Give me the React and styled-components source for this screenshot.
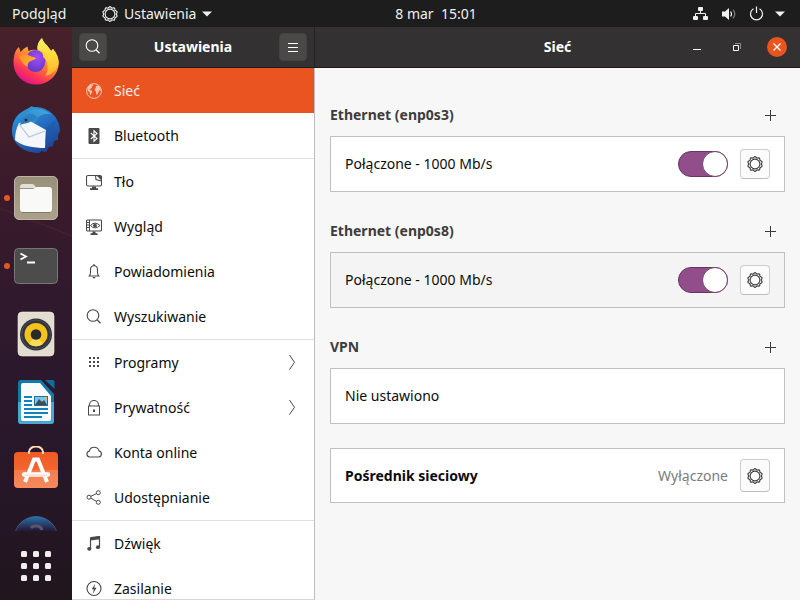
import React from "react";
import styled, { createGlobalStyle, css } from "styled-components";

const GlobalStyle = createGlobalStyle`
  *, *::before, *::after { box-sizing: border-box; }
  body {
    margin: 0;
    background: #f7f7f7;
    font-family: "Noto Sans", "Open Sans", sans-serif;
    font-size: 14px;
    line-height: 20px;
    color: #0c0c0c;
  }
  button { font: inherit; color: inherit; border: 0; padding: 0; background: none; cursor: default; }
  svg { display: block; flex: none; }
`;

/* ---------- shell ---------- */

const Desktop = styled.div`
  display: grid;
  grid-template-columns: 72px minmax(0, 1fr);
  grid-template-rows: 27px minmax(0, 1fr);
  height: 100vh;
  overflow: hidden;
`;

const TopBar = styled.header`
  grid-column: 1 / -1;
  display: grid;
  grid-template-columns: 72px minmax(0, 1fr) auto minmax(0, 1fr);
  align-items: center;
  background: #1d1d1d;
  color: #f0f0f0;
`;

const BarButton = styled.button`
  display: flex;
  align-items: center;
  gap: ${(p) => p.$gap || 6}px;
  padding: 0 ${(p) => p.$pad || 0}px;
  white-space: pre;
`;

const AppMenu = styled(BarButton)`
  margin-left: 30px;
`;

const StatusMenu = styled(BarButton)`
  justify-self: end;
  padding-right: 15px;
`;

const Dock = styled.nav`
  display: flex;
  flex-direction: column;
  min-height: 0;
  background:
    linear-gradient(201deg, transparent 48%, rgba(150, 60, 70, 0.18) 50%, transparent 52%) 0 175px / 100% 40px no-repeat,
    linear-gradient(#47212a 0%, #3c1b2a 25%, #2f192d 50%, #28172a 75%, #20151d 100%);
`;

const DockList = styled.div`
  flex: 1;
  min-height: 0;
  overflow: hidden;
  display: flex;
  flex-direction: column;
  gap: 20px;
  padding-top: 11px;
`;

const DockItem = styled.button`
  flex: none;
  position: relative;
  display: grid;
  place-items: center;
  height: 48px;

  ${(p) =>
    p.$running &&
    css`
      &::before {
        content: "";
        position: absolute;
        left: 4px;
        top: 21px;
        width: 6px;
        height: 6px;
        border-radius: 50%;
        background: #ea5420;
      }
    `}
`;

const AppsButton = styled.button`
  flex: none;
  display: grid;
  place-items: center;
  height: 69px;
`;

/* ---------- window ---------- */

const Window = styled.div`
  display: grid;
  grid-template-columns: 243px minmax(0, 1fr);
  grid-template-rows: 41px minmax(0, 1fr);
  min-height: 0;
`;

const HeaderBar = styled.div`
  display: grid;
  grid-template-columns: 28px minmax(0, 1fr) 28px;
  align-items: center;
  padding: 0 7px;
  background: #343132;
  border-bottom: 1px solid #1b1919;
  border-right: 1px solid #242222;
  color: #fff;
`;

const MainHeaderBar = styled(HeaderBar)`
  grid-template-columns: 100px minmax(0, 1fr) 100px;
  border-right: 0;
  padding: 0 13px;
`;

const HeaderTitle = styled.h1`
  margin: 0;
  font-size: 14px;
  line-height: 20px;
  font-weight: 700;
  text-align: center;
`;

const HeaderButton = styled.button`
  display: grid;
  place-items: center;
  width: 28px;
  height: 28px;
  border-radius: 4px;
  border: 1px solid #454342;
  background: #4b4948;
`;

const WindowControls = styled.div`
  display: flex;
  justify-content: flex-end;
  gap: 20px;
`;

const WindowControl = styled.button`
  display: grid;
  place-items: center;
  flex: none;
  width: 20px;
  height: 20px;
  border-radius: 50%;
  background: ${(p) => (p.$close ? "#e95420" : "transparent")};
`;

const Sidebar = styled.nav`
  min-height: 0;
  overflow: hidden;
  background: #fff;
  border-right: 1px solid #bdbdbd;
  border-bottom: 1px solid #d8d8d8;
`;

const SideGroup = styled.div`
  & + & { border-top: 1px solid #e2e2e2; }
`;

const SideLink = styled.a`
  display: flex;
  align-items: center;
  gap: 12px;
  height: 45px;
  padding: 0 18px 0 14px;
  text-decoration: none;
  color: ${(p) => (p.$active ? "#fdf1ec" : "#0c0c0c")};
  background: ${(p) => (p.$active ? "#e95420" : "transparent")};

  > svg { color: ${(p) => (p.$active ? "#fac6b4" : "#4a4a4a")}; }
`;

const SideLabel = styled.span`
  flex: 1;
`;

const Main = styled.main`
  min-height: 0;
  overflow: hidden;
  padding: 32px 15px 0;
  background: #f7f7f7;
`;

const Section = styled.section`
  margin-bottom: 24px;
`;

const SectionHead = styled.div`
  display: flex;
  align-items: center;
  justify-content: space-between;
  height: 30px;
  margin-bottom: 6px;
  padding-right: 4px;
`;

const SectionTitle = styled.h2`
  margin: 0;
  font-size: 14px;
  line-height: 20px;
  font-weight: 700;
  color: #3d3d3d;
`;

const AddButton = styled.button`
  display: grid;
  place-items: center;
  width: 21px;
  height: 21px;
`;

const Card = styled.div`
  display: flex;
  align-items: center;
  gap: 12px;
  height: ${(p) => (p.$compact ? 55 : 56)}px;
  padding: 0 14px;
  border: 1px solid #c0c0c0;
  background: ${(p) => (p.$muted ? "#f4f4f4" : "#fff")};
`;

const CardLabel = styled.span`
  flex: 1;
  font-weight: ${(p) => (p.$strong ? 700 : 400)};
`;

const CardStatus = styled.span`
  color: #7c7c7c;
`;

const Switch = styled.input`
  appearance: none;
  flex: none;
  position: relative;
  width: 50px;
  height: 26px;
  margin: 0;
  border: 1px solid #663561;
  border-radius: 13px;
  background: #924d8b;

  &::after {
    content: "";
    position: absolute;
    top: -1px;
    right: -1px;
    width: 26px;
    height: 26px;
    border: 1px solid #74406f;
    border-radius: 50%;
    background: #fff;
  }

  &:not(:checked) { background: #d5d5d5; }
  &:not(:checked)::after { right: auto; left: -1px; }
`;

const GearButton = styled.button`
  display: grid;
  place-items: center;
  flex: none;
  width: 30px;
  height: ${(p) => (p.$tall ? 33 : 30)}px;
  border: 1px solid #cdcdcd;
  border-bottom-color: #bdbdbd;
  border-radius: 4px;
  background: #fbfbfb;
  color: #3d3d3d;
`;

/* ---------- symbolic icons ---------- */

const Icon = ({ size = 16, children }) => (
  <svg width={size} height={size} viewBox="0 0 16 16" fill="none" stroke="currentColor" aria-hidden="true">
    {children}
  </svg>
);

/* Outline of a ten-toothed cog with rounded teeth. */
const cogOutline =
  Array.from({ length: 100 }, (_, i) => {
    const angle = (i / 100) * Math.PI * 2;
    const radius = 6.8 + 0.55 * Math.cos(angle * 10);
    const x = (8 + radius * Math.sin(angle)).toFixed(2);
    const y = (8 - radius * Math.cos(angle)).toFixed(2);
    return `${i ? "L" : "M"}${x} ${y}`;
  }).join("") + "z";

const Gear = () => (
  <Icon>
    <path d={cogOutline} strokeWidth="1.2" />
    <circle cx="8" cy="8" r="4.9" strokeWidth="1.1" />
  </Icon>
);

const Caret = () => (
  <svg width="10" height="6" viewBox="0 0 10 6" aria-hidden="true">
    <path d="M0 .5h10L5 5.5z" fill="currentColor" />
  </svg>
);

const Search = ({ size = 16 }) => (
  <Icon size={size}>
    <circle cx="7" cy="6.5" r="5.8" strokeWidth="1.1" />
    <path d="M11 10.700 14.500 14.200" strokeWidth="1.300" />
  </Icon>
);

const Plus = () => (
  <svg width="11" height="11" viewBox="0 0 11 11" aria-hidden="true">
    <path d="M5.5 0v11M0 5.5h11" stroke="#3a3a3a" strokeWidth="1" />
  </svg>
);

const Globe = () => (
  <Icon>
    <circle cx="8" cy="8" r="7.4" strokeWidth="1" />
    <g fill="currentColor" stroke="none">
      <path d="M1.200 5.200 3.200 2.600 5.800 1.200l1.400.5-.5 1-1.300.9.700 1-1 .9-1.200.3-.2 1.100 1.700.6.900 1.300-.9 1.400-.5 1.900-.8-.3-.4-2.500-1.600-1.400z" />
      <path d="M9.800 4.200 10.600 2.400l2 .5 1.800 2.300.4 2.500-.7.2-.9-.8-.6 1.600-.9 2.500-1.100.6-.6-1.500.1-1.700-1.200-1.100-.1-1.700 1-.8z" />
    </g>
  </Icon>
);

const Bluetooth = () => (
  <Icon>
    <rect x="2.500" y="0" width="11" height="16" rx="1" fill="currentColor" stroke="none" />
    <path d="M4.800 5 11 10.600 8 13.200V2.800l3 2.600L4.800 11" stroke="#fff" strokeWidth="1.100" />
  </Icon>
);

const Background = () => (
  <Icon>
    <path d="M9.500 1.500H2A1.500 1.500 0 0 0 .5 3v7.500A1.500 1.500 0 0 0 2 12h12a1.500 1.500 0 0 0 1.500-1.500V7M9.500 1.500 10 5.500 15.500 7V3A1.500 1.500 0 0 0 14 1.500z" strokeWidth="1.100" />
    <path d="M10.500 1.500H14L15.500 3v3.500z" fill="currentColor" stroke="none" />
    <path d="M6 12.500h4v1.700h2V16H4v-1.800h2z" fill="currentColor" stroke="none" />
  </Icon>
);

const Appearance = () => (
  <Icon>
    <rect x=".5" y="1" width="15" height="11" rx="1" strokeWidth="1.100" />
    <path d="M3.500 1v11M.5 3.500h3M.5 6h3M.5 8.500h3" strokeWidth="1" />
    <path d="M4.500 6.500Q9 1.700 14 6.500 9 11.300 4.500 6.500z" />
    <circle cx="9" cy="6.500" r="1.500" fill="currentColor" />
    <path d="M6.500 12.500h3v1.700h2V16h-7v-1.800h2z" fill="currentColor" stroke="none" />
  </Icon>
);

const Bell = () => (
  <Icon>
    <path d="M3.200 12c1.100-1.200 1.300-2 1.300-3.500V5.700C4.500 3.400 5.800 1.700 8 1.700s3.500 1.700 3.500 4v2.800c0 1.500.2 2.300 1.300 3.500z" strokeWidth="1.100" />
    <path d="M8 .2v1.500" strokeWidth="1.600" />
    <path d="M6.200 13h3.600L8 14.800z" fill="currentColor" stroke="none" />
  </Icon>
);

const Apps = () => (
  <Icon>
    <path d="M3 3h10M3 7h10M3 11h10" strokeWidth="2" strokeDasharray="2 2" />
  </Icon>
);

const Lock = () => (
  <Icon>
    <rect x="2.500" y="6" width="11" height="9" />
    <path d="M3.600 6V4.500a4.400 4 0 0 1 8.800 0V6" strokeWidth="1.100" />
    <path d="M7 9.500h2V12H7z" fill="currentColor" stroke="none" />
  </Icon>
);

const Cloud = () => (
  <Icon>
    <path d="M3.500 12a3 3 0 0 1-.2-5.900A5 5 0 0 1 13 5.900a3.100 3.100 0 0 1-.4 6.100z" strokeWidth="1.100" />
  </Icon>
);

const Share = () => (
  <Icon>
    <circle cx="3" cy="7.200" r="2" />
    <circle cx="12.300" cy="2.700" r="2" />
    <circle cx="12.300" cy="12.300" r="2" />
    <path d="m4.800 6.300 5.700-2.700M4.800 8.200l5.700 3.200" />
  </Icon>
);

const Music = () => (
  <Icon>
    <path d="M4.500 12.500V2.300L13.500.8v10" strokeWidth="1.200" />
    <path d="M4.500 1 14 0v3.200L4.500 4.400z" fill="currentColor" stroke="none" />
    <ellipse cx="3.300" cy="12.800" rx="2.100" ry="1.900" fill="currentColor" stroke="none" />
    <ellipse cx="12" cy="11.200" rx="2.100" ry="1.900" fill="currentColor" stroke="none" />
  </Icon>
);

const Power = () => (
  <Icon>
    <circle cx="8" cy="7.500" r="7" strokeWidth="1.100" />
    <path d="M9 2.700 5.800 8.200h2l-.8 4.500 3.500-5.900H8.300z" fill="currentColor" stroke="none" />
  </Icon>
);

const Chevron = () => (
  <svg width="8" height="16" viewBox="0 0 8 16" fill="none" aria-hidden="true">
    <path d="m1.500 0 5 7.300-5 7.300" stroke="currentColor" />
  </svg>
);

const Menu = () => (
  <Icon>
    <path d="M3 4.500h10M3 8.500h10M3 12.500h10" strokeWidth="1" />
  </Icon>
);

const StatusIcons = () => (
  <svg width="72" height="16" viewBox="0 0 72 16" fill="none" stroke="currentColor" aria-hidden="true">
    <g fill="currentColor" stroke="none">
      <rect x="5" y="1" width="5" height="4" rx="1" />
      <rect x="0" y="10" width="5" height="4" rx="1" />
      <rect x="10" y="10" width="5" height="4" rx="1" />
    </g>
    <path d="M7.500 5v2.500M2.500 10V7.500h10V10" />
    <path d="M29 5.500h3L36 2v12l-4-3.500h-3z" fill="currentColor" stroke="none" />
    <path d="M37.600 5.500q1.800 2.500 0 5" strokeWidth="1.200" />
    <path d="M40 3.600q3.600 4.400 0 8.800" stroke="#777" strokeWidth="1.300" />
    <path d="M60.500 2.700a6 6 0 1 0 6 0M63.500 .5v6.500" strokeWidth="1.200" />
  </svg>
);

/* ---------- dock artwork ---------- */

const Art = ({ children }) => (
  <svg width="48" height="48" viewBox="0 0 48 48" aria-hidden="true">
    {children}
  </svg>
);

const Firefox = () => (
  <Art>
    <defs>
      <linearGradient id="ffBody" x1=".85" y1=".1" x2=".35" y2="1">
        <stop offset="0" stopColor="#ffe23c" />
        <stop offset=".3" stopColor="#ffb52d" />
        <stop offset=".55" stopColor="#ff7438" />
        <stop offset=".8" stopColor="#fb3358" />
        <stop offset="1" stopColor="#e2128a" />
      </linearGradient>
      <linearGradient id="ffFlame" x1=".5" y1="0" x2=".6" y2="1">
        <stop offset="0" stopColor="#f5f064" />
        <stop offset=".5" stopColor="#ffd83a" />
        <stop offset="1" stopColor="#ffb02e" />
      </linearGradient>
      <radialGradient id="ffCore" cx=".6" cy=".35" r=".7">
        <stop offset="0" stopColor="#a54cf5" />
        <stop offset="1" stopColor="#5f38c4" />
      </radialGradient>
      <linearGradient id="ffHead" x1="0" y1="0" x2="1" y2=".6">
        <stop offset="0" stopColor="#ff8a2b" />
        <stop offset="1" stopColor="#ffb62c" />
      </linearGradient>
    </defs>
    <path
      d="M7 9 8.500 14Q12 10 15.500 8.500L16.500 13Q20 11 26 12C25 7 27 3 30 0c1 5 6 7 9 13l2-2c4 4 5.700 9 5.700 14A22.500 21.500 0 0 1 1.500 25C1.500 18 3 12 7 9z"
      fill="url(#ffBody)"
    />
    <path d="M30 0c1 5 6 7 9 13l2-2c4 5 6 10 5.600 15-2 6-6 10-13 12 5-10 1-19-7.600-25C24 8 27 3 30 0z" fill="url(#ffFlame)" />
    <ellipse cx="23.500" cy="23" rx="10" ry="11" fill="url(#ffCore)" />
    <path d="M27 12c8 2 11 8 9 16 0-4-2-7-5-9 1-2-1-5-4-7z" fill="#ffcf36" />
    <path d="M7 18c4-3 8-2 11 0 2 1 5 1 6 2-1 2-4 2-7 4-1 1-2 3-1 5-4-2-8-6-9-11z" fill="url(#ffHead)" />
  </Art>
);

const Thunderbird = () => (
  <Art>
    <defs>
      <linearGradient id="tbBody" x1=".2" y1="0" x2=".8" y2="1">
        <stop offset="0" stopColor="#2f9be0" />
        <stop offset=".45" stopColor="#2470c2" />
        <stop offset="1" stopColor="#203c8f" />
      </linearGradient>
      <linearGradient id="tbHead" x1="0" y1="1" x2="1" y2="0">
        <stop offset="0" stopColor="#2576bd" />
        <stop offset="1" stopColor="#45acdf" />
      </linearGradient>
    </defs>
    <path d="M13 4Q17 2 20 0l1 1C36 0 48 11 48 25l-2 4 0 5-4 1-1 5-4 1-3 5-4-1-3 2C12 47 0 38 0 25 0 15 5 8 13 4z" fill="url(#tbBody)" />
    <path d="M8 21C9 10 15 3 25 3c5 0 10 2 14 5-7-1-13 2-15 7-3 5-9 6-16 6z" fill="url(#tbHead)" />
    <path d="m7 17 11-2 16 9-1 18C22 42 9 40 3 34 3 28 4 23 7 17z" fill="#f5f6f9" />
    <path d="m7 18 10 13 16-6" fill="none" stroke="#bcc4d0" strokeWidth="1.200" />
    <path d="M8 19C9 14 13 9 18 8c4 0 7 2 7 5-4 1-7 4-14 5z" fill="#2a80c4" />
    <circle cx="14" cy="14" r="1.500" fill="#342921" />
    <path d="m34 22 10-8-2 9 5 2-7 6 2 4-9 2z" fill="#1a55a8" opacity=".5" />
  </Art>
);

const Files = () => (
  <Art>
    <defs>
      <linearGradient id="fileBack" x1="0" y1="0" x2="0" y2="1">
        <stop offset="0" stopColor="#989078" />
        <stop offset="1" stopColor="#aaa18a" />
      </linearGradient>
    </defs>
    <rect x="2.500" y="2.500" width="43" height="43" rx="4.500" fill="url(#fileBack)" stroke="#b9b3a2" />
    <path d="M8 13a3 3 0 0 1 3-3h9q2 0 3 2l1 2H8z" fill="#e2dfd8" />
    <path d="M8 15h13l3-2h13a3 3 0 0 1 3 3v19a3 3 0 0 1-3 3H11a3 3 0 0 1-3-3z" fill="#f9f9f8" />
    <path d="M10 38.500h28" stroke="#7f7867" />
  </Art>
);

const Terminal = () => (
  <Art>
    <rect x="2.500" y="6.500" width="43" height="35" rx="4" fill="#4c4c4c" stroke="#777" />
    <path d="m8.500 11.500 5.500 3-5.500 3M15 20.500h8" fill="none" stroke="#fff" strokeWidth="1.800" />
  </Art>
);

const Rhythmbox = () => (
  <Art>
    <rect x="6" y="2" width="36" height="44" rx="4" fill="#e3ddd0" stroke="#f0ece3" strokeWidth=".6" />
    <circle cx="24" cy="24.500" r="16" fill="#32343d" />
    <circle cx="24" cy="24.500" r="14.500" fill="none" stroke="#4c4d54" />
    <circle cx="24" cy="24.500" r="11.500" fill="#f3c21b" />
    <path d="M24 24.500 17 34a11.500 11.500 0 0 0 14 0z" fill="#f9dc5c" />
    <circle cx="24" cy="24.500" r="5.300" fill="#292a2b" />
  </Art>
);

const Writer = () => (
  <Art>
    <path d="M9 2h20l13 14v27a3 3 0 0 1-3 3H9a3 3 0 0 1-3-3V5a3 3 0 0 1 3-3z" fill="#1478ad" />
    <path d="M6 24h36v19a3 3 0 0 1-3 3H9a3 3 0 0 1-3-3z" fill="#4aa6d3" />
    <path d="M11 5h17l11 13v23a2 2 0 0 1-2 2H11a2 2 0 0 1-2-2V7a2 2 0 0 1 2-2z" fill="#fafbfc" />
    <path d="M33 2h8a1.500 1.500 0 0 1 1.500 1.500V11z" fill="#126c9f" />
    <path d="M12 19h8M12 23h8M12 27h8M12 31h24M12 35h24M12 39h18" stroke="#1482bb" strokeWidth="2" />
    <rect x="22.500" y="18.500" width="13" height="9" fill="#79c7ef" stroke="#1675a6" />
    <path d="m23 27 4-6 3 3 2-2 3 5z" fill="#484b4d" />
    <path d="M32 19h3v3z" fill="#f1ba21" />
  </Art>
);

const Software = () => (
  <Art>
    <defs>
      <linearGradient id="bag" x1="0" y1="0" x2="0" y2="1">
        <stop offset="0" stopColor="#f05a24" />
        <stop offset=".5" stopColor="#f3662f" />
        <stop offset=".51" stopColor="#f57b4b" />
        <stop offset="1" stopColor="#f58b5e" />
      </linearGradient>
    </defs>
    <rect x="2" y="6" width="44" height="36" rx="4" fill="url(#bag)" />
    <path d="M17 8V6a7 5.500 0 0 1 14 0v2" fill="none" stroke="#ffdcb4" strokeWidth="2" />
    <g fill="none" stroke="#fff">
      <path d="m13 36 9-22.500h4L35 36" strokeWidth="4" />
      <path d="M12 28.500h24" strokeWidth="4.500" strokeLinecap="round" />
      <path d="M13 29h22" stroke="#f9a98b" strokeWidth=".6" />
    </g>
  </Art>
);

const Help = () => (
  <Art>
    <defs>
      <linearGradient id="helpFill" x1="0" y1="0" x2="0" y2="1">
        <stop offset="0" stopColor="#2c70ae" />
        <stop offset=".32" stopColor="#241c38" />
        <stop offset="1" stopColor="#241c30" />
      </linearGradient>
    </defs>
    <circle cx="24" cy="24" r="21.500" fill="url(#helpFill)" stroke="#477fae" strokeWidth=".6" />
    <path d="M19 14c2-3 10-3 11 2" fill="none" stroke="#5b5570" strokeWidth="3" />
  </Art>
);

const AppGrid = () => (
  <svg width="30" height="30" viewBox="0 0 30 30" fill="#f1efed" aria-hidden="true">
    {[0, 12, 24].map((y) =>
      [0, 12, 24].map((x) => <rect key={`${x}-${y}`} x={x} y={y} width="6" height="6" rx="1.500" />)
    )}
  </svg>
);

/* ---------- content ---------- */

const dockApps = [
  { name: "Firefox", Picture: Firefox },
  { name: "Thunderbird", Picture: Thunderbird },
  { name: "Pliki", Picture: Files, running: true },
  { name: "Terminal", Picture: Terminal, running: true },
  { name: "Rhythmbox", Picture: Rhythmbox },
  { name: "LibreOffice Writer", Picture: Writer },
  { name: "Ubuntu Software", Picture: Software },
  { name: "Pomoc", Picture: Help },
];

const sideGroups = [
  [
    { label: "Sieć", Glyph: Globe, active: true },
    { label: "Bluetooth", Glyph: Bluetooth },
  ],
  [
    { label: "Tło", Glyph: Background },
    { label: "Wygląd", Glyph: Appearance },
    { label: "Powiadomienia", Glyph: Bell },
    { label: "Wyszukiwanie", Glyph: Search },
  ],
  [
    { label: "Programy", Glyph: Apps, more: true },
    { label: "Prywatność", Glyph: Lock, more: true },
    { label: "Konta online", Glyph: Cloud },
    { label: "Udostępnianie", Glyph: Share },
  ],
  [
    { label: "Dźwięk", Glyph: Music },
    { label: "Zasilanie", Glyph: Power },
  ],
];

const Connection = ({ title, device, muted }) => (
  <Section>
    <SectionHead>
      <SectionTitle>{title}</SectionTitle>
      <AddButton aria-label={`Dodaj profil ${device}`}><Plus /></AddButton>
    </SectionHead>
    <Card $muted={muted}>
      <CardLabel as="label" htmlFor={device}>Połączone - 1000 Mb/s</CardLabel>
      <Switch type="checkbox" role="switch" id={device} defaultChecked />
      <GearButton aria-label={`Opcje ${device}`}><Gear /></GearButton>
    </Card>
  </Section>
);

export default function App() {
  return (
    <>
      <GlobalStyle />
      <Desktop>
        <TopBar>
          <BarButton $pad={12}>Podgląd</BarButton>
          <AppMenu>
            <Gear />
            Ustawienia
            <Caret />
          </AppMenu>
          <BarButton>{"8 mar  15:01"}</BarButton>
          <StatusMenu $gap={10} aria-label="Menu systemowe">
            <StatusIcons />
            <Caret />
          </StatusMenu>
        </TopBar>

        <Dock aria-label="Dok">
          <DockList>
            {dockApps.map(({ name, Picture, running }) => (
              <DockItem key={name} aria-label={name} $running={running}>
                <Picture />
              </DockItem>
            ))}
          </DockList>
          <AppsButton aria-label="Wyświetl programy"><AppGrid /></AppsButton>
        </Dock>

        <Window>
          <HeaderBar>
            <HeaderButton aria-label="Szukaj"><Search /></HeaderButton>
            <HeaderTitle>Ustawienia</HeaderTitle>
            <HeaderButton aria-label="Menu"><Menu /></HeaderButton>
          </HeaderBar>
          <MainHeaderBar>
            <span />
            <HeaderTitle as="h2">Sieć</HeaderTitle>
            <WindowControls>
              <WindowControl aria-label="Zminimalizuj">
                <svg width="8" height="8" viewBox="0 0 8 8"><path d="M0 6.500h8" stroke="#fff" /></svg>
              </WindowControl>
              <WindowControl aria-label="Przywróć">
                <svg width="8" height="8" viewBox="0 0 8 8" fill="none">
                  <path d="M2 .5h5.500V6" stroke="#8c8a8a" />
                  <path d="M.5 2.500h5v5h-5z" stroke="#fff" />
                </svg>
              </WindowControl>
              <WindowControl $close aria-label="Zamknij">
                <svg width="8" height="8" viewBox="0 0 8 8"><path d="m.5.5 7 7m0-7-7 7" stroke="#fff" strokeWidth="1.300" /></svg>
              </WindowControl>
            </WindowControls>
          </MainHeaderBar>

          <Sidebar aria-label="Ustawienia">
            {sideGroups.map((group) => (
              <SideGroup key={group[0].label}>
                {group.map(({ label, Glyph, active, more }) => (
                  <SideLink key={label} href={`#${label}`} $active={active} aria-current={active ? "page" : undefined}>
                    <Glyph />
                    <SideLabel>{label}</SideLabel>
                    {more && <Chevron />}
                  </SideLink>
                ))}
              </SideGroup>
            ))}
          </Sidebar>

          <Main>
            <Connection title="Ethernet (enp0s3)" device="enp0s3" />
            <Connection title="Ethernet (enp0s8)" device="enp0s8" muted />
            <Section>
              <SectionHead>
                <SectionTitle>VPN</SectionTitle>
                <AddButton aria-label="Dodaj VPN"><Plus /></AddButton>
              </SectionHead>
              <Card>
                <CardLabel>Nie ustawiono</CardLabel>
              </Card>
            </Section>
            <Card $compact>
              <CardLabel $strong>Pośrednik sieciowy</CardLabel>
              <CardStatus>Wyłączone</CardStatus>
              <GearButton $tall aria-label="Opcje pośrednika sieciowego"><Gear /></GearButton>
            </Card>
          </Main>
        </Window>
      </Desktop>
    </>
  );
}
